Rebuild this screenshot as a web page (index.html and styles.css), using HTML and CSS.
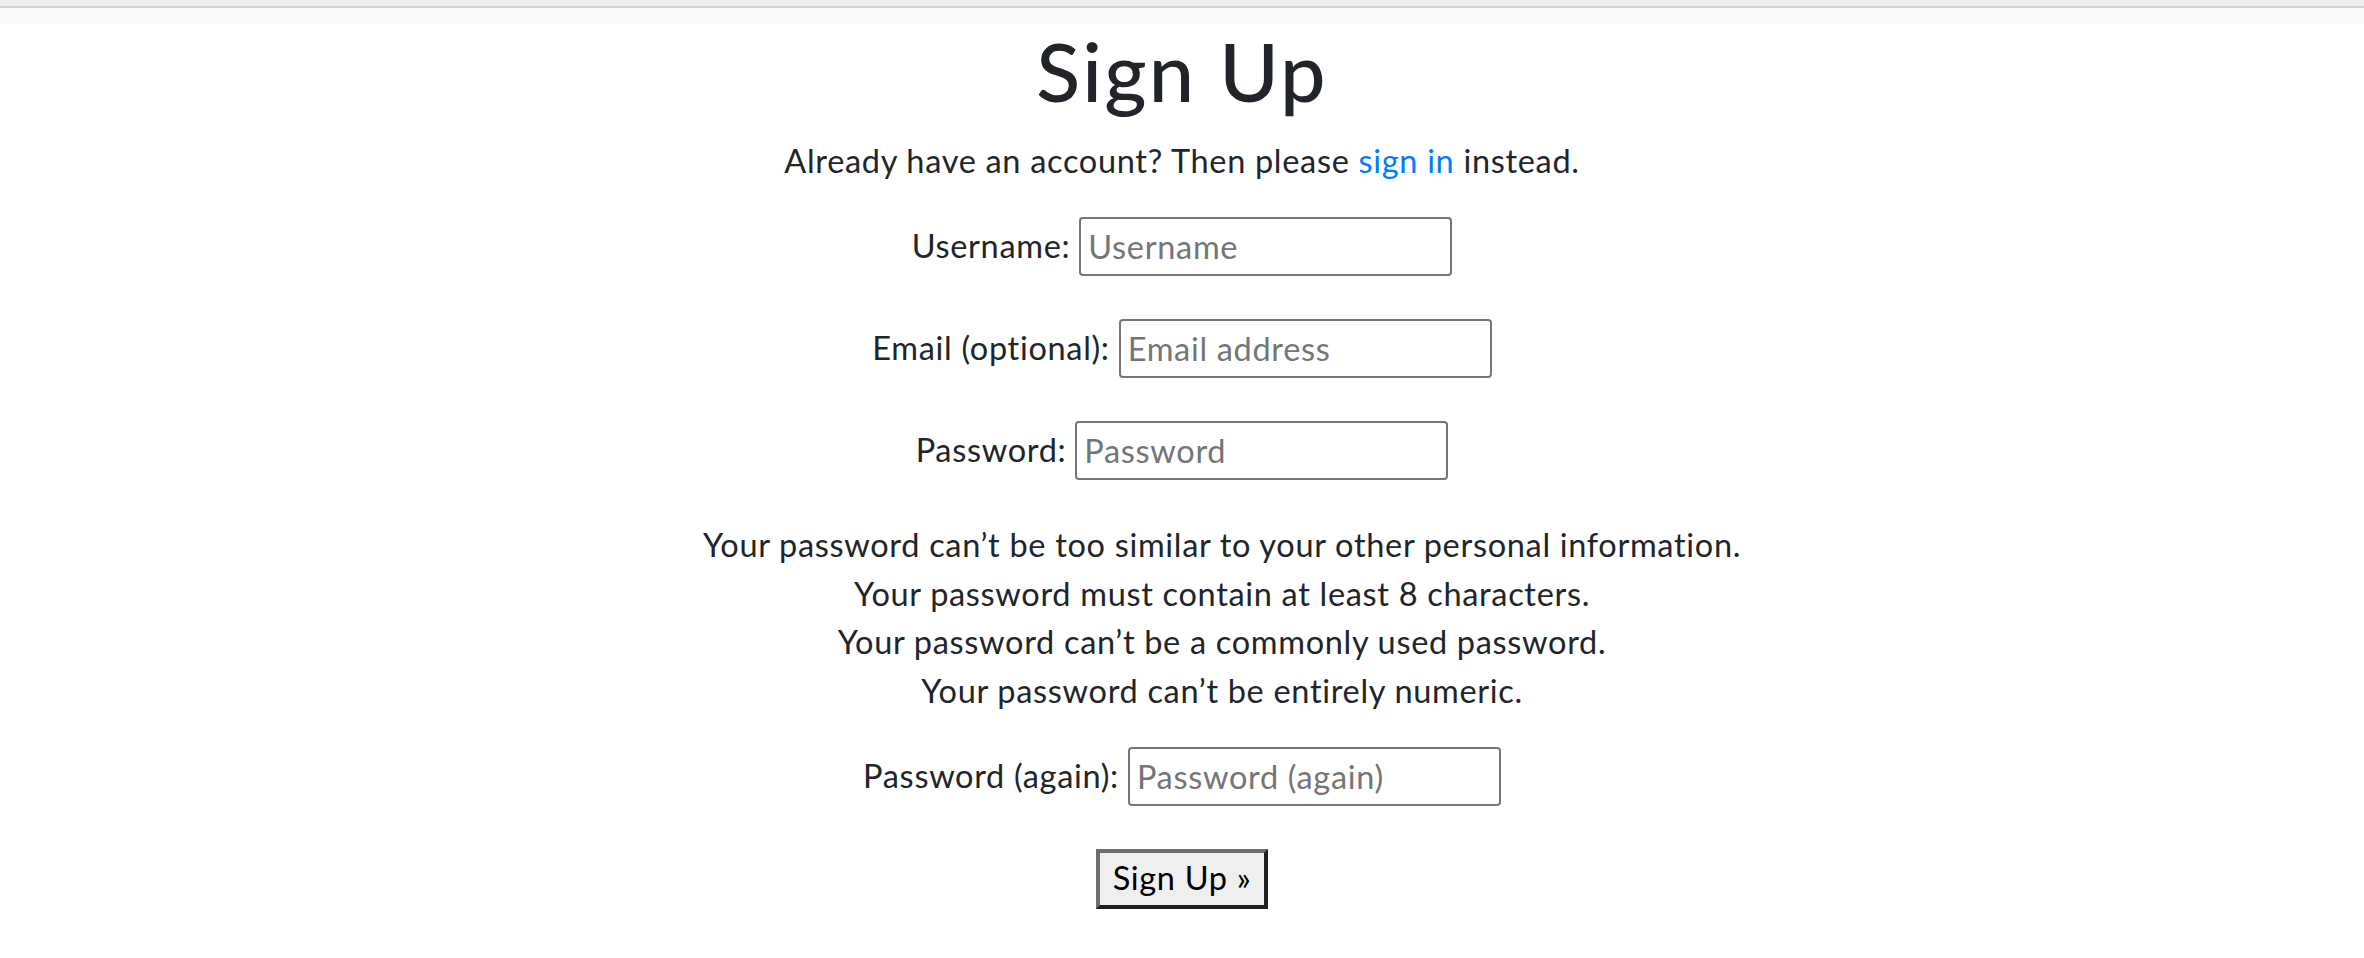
FILE: index.html
```html
<!DOCTYPE html>
<html lang="en">
<head>
<meta charset="utf-8">
<title>Sign Up</title>
<link rel="stylesheet" href="styles.css">
</head>
<body>
<div class="topstrip"></div>
<div class="navband"></div>
<main class="content">
  <h1 class="title">Sign Up</h1>
  <p class="lead-line">Already have an account? Then please <a class="link" href="#">sign in</a> instead.</p>
  <form class="signup-form">
    <div class="field">
      <label class="field-label" for="u">Username:</label>
      <input class="field-input" id="u" type="text" placeholder="Username">
    </div>
    <div class="field">
      <label class="field-label" for="e">Email (optional):</label>
      <input class="field-input" id="e" type="email" placeholder="Email address">
    </div>
    <div class="field">
      <label class="field-label" for="p1">Password:</label>
      <input class="field-input" id="p1" type="password" placeholder="Password">
    </div>
    <ul class="helptext">
      <li>Your password can’t be too similar to your other personal information.</li>
      <li>Your password must contain at least 8 characters.</li>
      <li>Your password can’t be a commonly used password.</li>
      <li>Your password can’t be entirely numeric.</li>
    </ul>
    <div class="field field-again">
      <label class="field-label" for="p2">Password (again):</label>
      <input class="field-input" id="p2" type="password" placeholder="Password (again)">
    </div>
    <div class="actions">
      <button class="submit" type="submit">Sign Up »</button>
    </div>
  </form>
</main>
</body>
</html>
```
FILE: styles.css
```css
html, body {
  margin: 0;
  padding: 0;
  background: #fff;
}
body {
  font-family: "Lato", "Liberation Sans", sans-serif;
  font-size: 32.5px;
  line-height: 48.75px;
  letter-spacing: 0.021em;
  color: #212529;
}
.topstrip {
  height: 6px;
  background: #efeff1;
  border-bottom: 2px solid #d2d3d5;
}
.navband {
  height: 16px;
  background: #f8f9fa;
}
.content {
  text-align: center;
}
.title {
  margin: -2px 0 0;
  font-size: 81px;
  line-height: 97px;
  font-weight: 500;
  letter-spacing: 0.028em;
}
.lead-line {
  margin: 18px 0 0;
}
.link {
  color: #007bff;
  text-decoration: none;
}
.signup-form {
  margin: 31px 0 0;
}
.field {
  display: flex;
  justify-content: center;
  align-items: center;
  gap: 9px;
  height: 59px;
  margin-bottom: 43px;
}
.field-label {
  white-space: nowrap;
}
.field-input {
  box-sizing: border-box;
  width: 373px;
  height: 59px;
  margin: 0;
  padding: 0 7px;
  border: 2px solid #767676;
  border-radius: 4px;
  font: inherit;
  letter-spacing: inherit;
  color: #212529;
  background: #fff;
}
.field-input::placeholder {
  color: #757575;
  opacity: 1;
}
.helptext {
  list-style: none;
  margin: -2px 0 0;
  padding: 0 0 0 80px;
}
.field-again {
  margin-top: 31px;
}
.actions {
  display: flex;
  justify-content: center;
}
.submit {
  box-sizing: border-box;
  width: 172px;
  height: 60px;
  padding: 0;
  margin: 0;
  background: #efefef;
  border: 4px solid;
  border-color: #6e6e6e #1f1f1f #1f1f1f #6e6e6e;
  font: inherit;
  letter-spacing: inherit;
  color: #000;
}
```
